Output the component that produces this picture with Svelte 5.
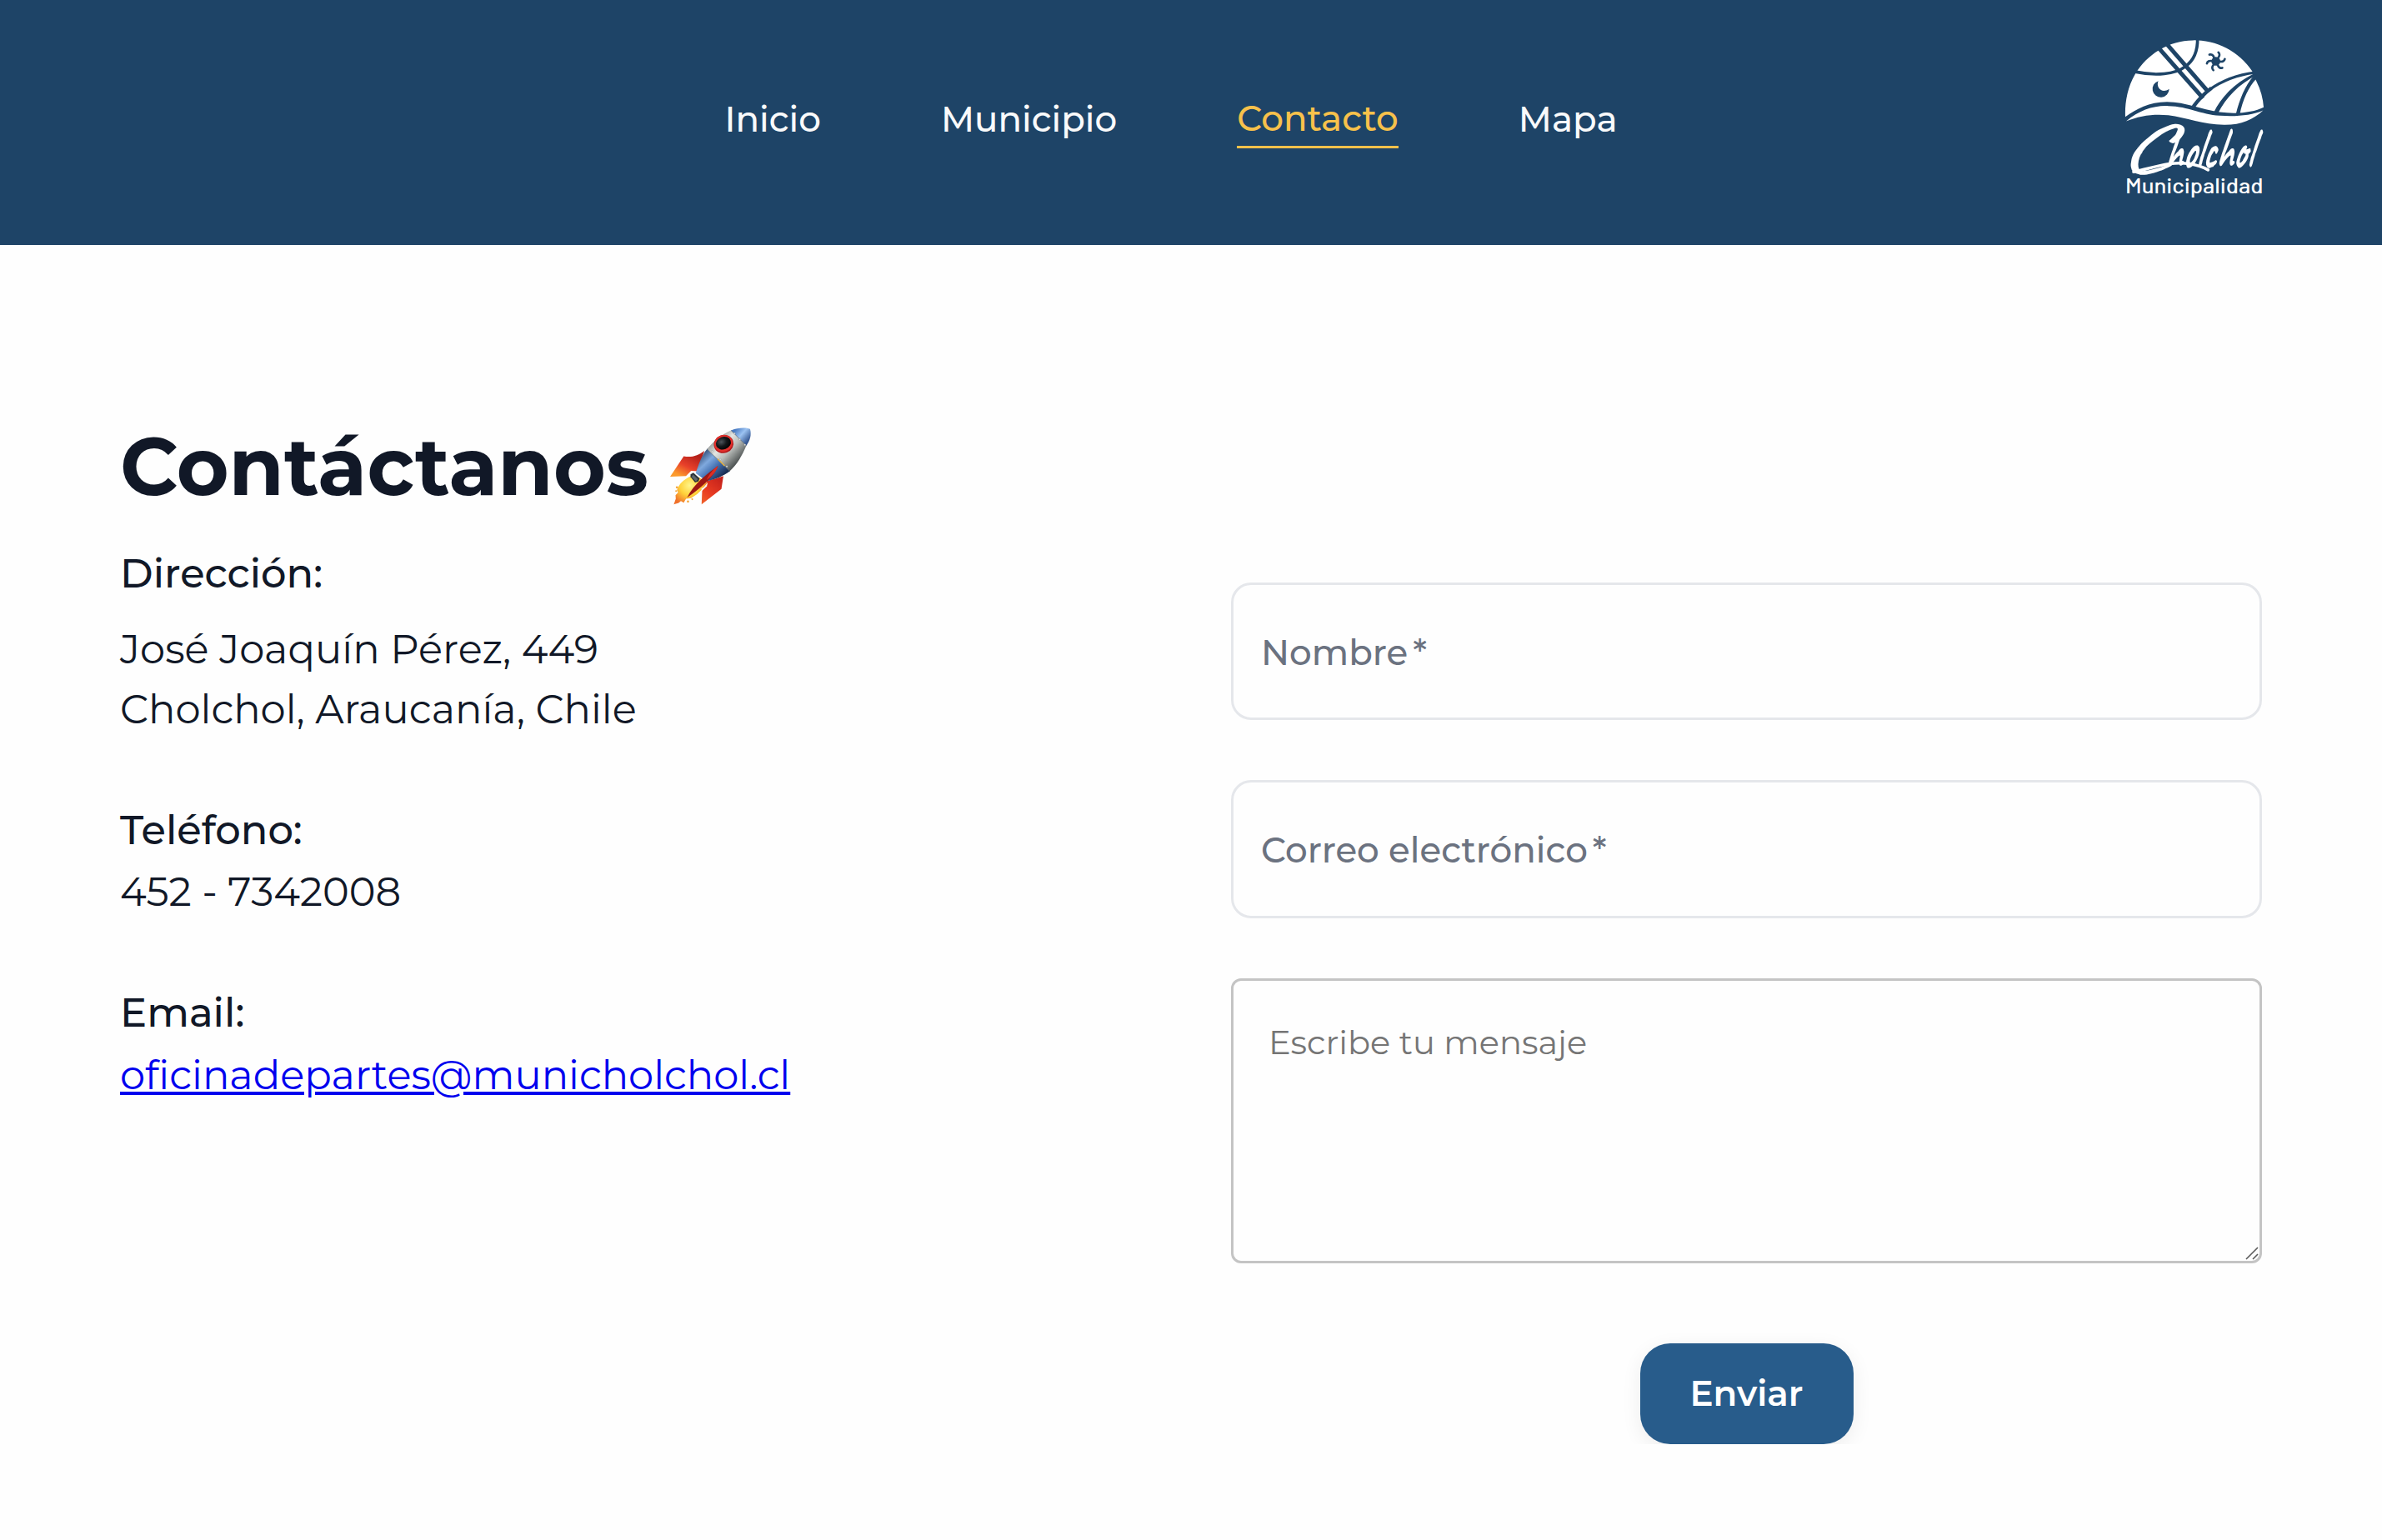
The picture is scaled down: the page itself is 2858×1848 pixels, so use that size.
<script>
  const links = [
    { label: 'Inicio' },
    { label: 'Municipio' },
    { label: 'Contacto', active: true },
    { label: 'Mapa' }
  ];
</script>

{#snippet logo()}
  <svg class="logo" viewBox="78 40 522 590" role="img" aria-label="Cholchol Municipalidad">
    <path fill="#fff" d="M90 331C88 285 96 228 125 178A249 249 0 0 1 547 167L549 178L562 203A249 249 0 0 1 588 297C550 316 490 322 430 314C360 304 310 278 240 277C175 278 130 302 90 331Z" />
    <g fill="none" stroke="#1e4467">
      <path stroke-width="11" d="M126 169C200 185 270 178 306 150C338 128 351 95 350 48" />
      <path stroke-width="15" d="M211 84L370 264" />
      <path stroke-width="15" d="M240 70L388 240" />
      <path stroke-width="13" d="M335 294C355 268 378 244 400 228" />
      <path stroke-width="10" d="M392 234C440 200 490 180 556 172" />
    </g>
    <g fill="#1e4467">
      <path d="M408 316C434 262 480 212 552 176L562 182C500 212 452 262 424 318Z" />
      <path d="M488 322C500 270 522 216 552 184L562 194C534 222 512 272 502 322Z" />
      <path d="M209 202A30 30 0 1 0 248 231C234 241 218 239 211 228C206 219 205 210 209 202Z" />
      <circle cx="416" cy="131" r="16" />
    </g>
    <g fill="none" stroke="#1e4467" stroke-width="8" stroke-linecap="round">
      {#each [0, 60, 120, 180, 240, 300] as turn}
        <path d="M424 119C430 112 431 104 425 99" transform="rotate({turn} 416 131)" />
      {/each}
    </g>
    <path fill="#fff" d="M93 347C140 308 190 290 245 292C320 294 360 322 430 327C490 331 545 326 586 308C550 342 505 361 445 360C370 358 310 334 245 325C190 320 140 327 93 347Z" />
    <g fill="#fff" class="script" transform="translate(0 515) skewX(-8)">
      <text class="initial" x="62" y="10" textLength="188" lengthAdjust="spacingAndGlyphs">C</text>
      <text class="rest" x="232" y="0" textLength="314" lengthAdjust="spacingAndGlyphs">holchol</text>
    </g>
    <path fill="none" stroke="#fff" stroke-width="11" stroke-linecap="round" d="M120 529C190 515 250 490 320 500Q360 506 388 522" />
    <text class="sub" x="90" y="606" fill="#fff" textLength="496" lengthAdjust="spacingAndGlyphs">Municipalidad</text>
  </svg>
{/snippet}

{#snippet rocket()}
  <svg class="rocket" viewBox="70 95 300 285" role="img" aria-label="🚀">
    <defs>
      <linearGradient id="hull" gradientUnits="userSpaceOnUse" x1="225" y1="140" x2="315" y2="225">
        <stop offset="0" stop-color="#8d9190" />
        <stop offset=".35" stop-color="#e3e5e2" />
        <stop offset=".6" stop-color="#b9bdba" />
        <stop offset="1" stop-color="#4b5050" />
      </linearGradient>
      <linearGradient id="blue" gradientUnits="userSpaceOnUse" x1="180" y1="195" x2="255" y2="275">
        <stop offset="0" stop-color="#2f4a74" />
        <stop offset=".35" stop-color="#7fa9de" />
        <stop offset=".65" stop-color="#4470b0" />
        <stop offset="1" stop-color="#1b2f55" />
      </linearGradient>
      <linearGradient id="tip" gradientUnits="userSpaceOnUse" x1="310" y1="105" x2="360" y2="150">
        <stop offset="0" stop-color="#4a7cc4" />
        <stop offset=".4" stop-color="#9cc3f2" />
        <stop offset="1" stop-color="#1f3f7c" />
      </linearGradient>
      <linearGradient id="finLeft" gradientUnits="userSpaceOnUse" x1="160" y1="195" x2="120" y2="275">
        <stop offset="0" stop-color="#b3201a" />
        <stop offset=".55" stop-color="#e8402a" />
        <stop offset="1" stop-color="#fb9a2c" />
      </linearGradient>
      <linearGradient id="finRight" gradientUnits="userSpaceOnUse" x1="255" y1="280" x2="185" y2="365">
        <stop offset="0" stop-color="#c5221b" />
        <stop offset=".6" stop-color="#e93c22" />
        <stop offset="1" stop-color="#f0602a" />
      </linearGradient>
      <radialGradient id="flame" gradientUnits="userSpaceOnUse" cx="145" cy="305" r="70">
        <stop offset="0" stop-color="#fff58a" />
        <stop offset=".5" stop-color="#ffd23a" />
        <stop offset="1" stop-color="#f0702a" />
      </radialGradient>
      <radialGradient id="glass" cx=".4" cy=".35" r=".7">
        <stop offset="0" stop-color="#4c545a" />
        <stop offset=".5" stop-color="#14181b" />
        <stop offset="1" stop-color="#000" />
      </radialGradient>
    </defs>
    <path fill="url(#flame)" d="M150 272C125 284 108 298 100 322L104 330L95 340L96 352L89 372L106 367L114 360L124 366L132 352L150 350L172 335L190 318L208 296L180 278Z" />
    <g fill="#f4a63a"><circle cx="100" cy="312" r="4" /><circle cx="97" cy="325" r="3" /><circle cx="139" cy="362" r="4" /><circle cx="154" cy="354" r="3" /></g>
    <path fill="url(#finLeft)" d="M197 183L172 255L150 254L132 272L76 274L124 202C150 208 175 200 197 183Z" />
    <path fill="url(#finRight)" d="M264 272L257 318L187 372L189 324L208 300L204 290L240 280Z" />
    <path fill="#f5f5f5" d="M188 324L206 308L207 296L198 310L186 316Z" />
    <path fill="url(#blue)" d="M207 176L288 254C262 274 235 284 204 290L166 262C176 235 184 204 207 176Z" />
    <path fill="url(#hull)" d="M292 110L345 164C330 200 312 232 286 255L206 177C232 146 258 126 292 110Z" />
    <path fill="url(#tip)" d="M291 111C315 102 340 100 358 106C364 126 358 146 345 165Z" />
    <path fill="none" stroke="#51606c" stroke-width="2" d="M291 111L345 165M206 177L286 255" />
    <path fill="none" stroke="#e8b13a" stroke-width="4" d="M244 212L268 236" />
    <g fill="#e9ebea" stroke="#777" stroke-width="1">
      <circle cx="303" cy="122" r="3" /><circle cx="322" cy="143" r="3" /><circle cx="340" cy="162" r="3" />
      <circle cx="224" cy="185" r="3" /><circle cx="253" cy="213" r="3" /><circle cx="276" cy="238" r="3" />
    </g>
    <path fill="#2d3337" d="M158 260L180 280L176 291L164 295L148 275L148 266Z" />
    <path fill="#5d676d" d="M157 267L174 283L167 291L152 275Z" />
    <path fill="#9e1712" d="M245 236C210 262 160 298 136 348C165 330 190 305 212 286C226 270 240 252 245 236Z" />
    <path fill="#dd2f24" d="M245 236C230 246 216 262 205 285C224 274 240 254 245 236Z" />
    <ellipse cx="265" cy="159" rx="35" ry="32" fill="#b3181a" transform="rotate(-20 265 159)" />
    <ellipse cx="264" cy="157" rx="33" ry="29" fill="#e2302c" transform="rotate(-20 264 157)" />
    <ellipse cx="264" cy="156" rx="27" ry="22" fill="url(#glass)" transform="rotate(-20 264 156)" />
  </svg>
{/snippet}

<header>
  <nav>
    {#each links as link}
      <a class="link" class:active={link.active} href="#{link.label.toLowerCase()}">{link.label}</a>
    {/each}
  </nav>
  {@render logo()}
</header>

<main>
  <section>
    <h1>Contáctanos {@render rocket()}</h1>
    <h2>Dirección:</h2>
    <p class="address">José Joaquín Pérez, 449<br />Cholchol, Araucanía, Chile</p>
    <h2 class="spaced">Teléfono:</h2>
    <p class="value">452 - 7342008</p>
    <h2 class="spaced">Email:</h2>
    <p class="value mail"><a href="mailto:oficinadepartes@municholchol.cl">oficinadepartes@municholchol.cl</a></p>
  </section>

  <form>
    <div class="field">Nombre<span class="star">*</span></div>
    <div class="field">Correo electrónico<span class="star">*</span></div>
    <div class="message">
      <textarea placeholder="Escribe tu mensaje"></textarea>
      <svg class="grip" viewBox="0 0 16 16" aria-hidden="true">
        <path d="M1 15L15 1M9 15L15 9" fill="none" stroke="#5c5c5c" stroke-width="1.6" />
      </svg>
    </div>
    <button type="button">Enviar</button>
  </form>
</main>

<style>
  :global(body) {
    margin: 0;
    background: #fefefe;
    font-family: Montserrat, 'Open Sans', sans-serif;
    color: #111827;
  }

  header {
    display: flex;
    align-items: flex-start;
    justify-content: space-between;
    box-sizing: border-box;
    height: 294px;
    padding: 43px 138px 0 869.5px;
    background: #1e4467;
  }

  nav {
    display: flex;
    align-items: flex-start;
    gap: 144px;
    padding-top: 70px;
  }

  .link {
    color: #f9fafb;
    font-size: 42px;
    font-weight: 500;
    line-height: 60px;
    text-decoration: none;
  }

  .link.active {
    margin-top: -1px;
    padding-bottom: 3px;
    border-bottom: 3px solid #f7c14b;
    color: #f7c14b;
  }

  .logo {
    display: block;
    width: 174px;
    height: 197px;
    overflow: visible;
  }

  .script {
    font-family: Caveat, cursive;
    font-weight: 600;
  }

  .initial {
    font-size: 248px;
    font-weight: 400;
  }

  .rest {
    font-size: 216px;
  }

  .sub {
    font-family: Barlow, Roboto, sans-serif;
    font-size: 76px;
    font-weight: 500;
  }

  main {
    display: grid;
    grid-template-columns: 1237px 1237px;
    gap: 96px;
    padding: 207px 144px 0;
  }

  h1 {
    display: flex;
    gap: 24px;
    margin: 0 0 34px;
    font-size: 96px;
    font-weight: 700;
    line-height: 117px;
  }

  .rocket {
    width: 102px;
    height: 97px;
    margin-top: 10px;
  }

  h2 {
    margin: 0;
    font-size: 48px;
    font-weight: 500;
    line-height: 72px;
  }

  h2.spaced {
    margin-top: 73px;
  }

  p {
    margin: 0;
    font-size: 48px;
    line-height: 72px;
  }

  .address {
    margin: 19px 0 73px;
  }

  .value {
    margin-top: 2px;
  }

  .mail {
    margin-top: 3px;
  }

  .mail a {
    color: #0000ee;
  }

  form {
    display: flex;
    flex-direction: column;
    padding-top: 198px;
  }

  .field {
    box-sizing: border-box;
    height: 165.3px;
    margin-bottom: 72px;
    padding: 57px 33px 0;
    border: 3px solid #e5e7eb;
    border-radius: 24px;
    color: #6b7280;
    font-size: 42px;
    font-weight: 500;
    line-height: 48px;
  }

  .star {
    margin-left: 6px;
  }

  .message {
    position: relative;
    height: 342px;
  }

  textarea {
    display: block;
    box-sizing: border-box;
    width: 100%;
    height: 100%;
    padding: 50px 42px;
    border: 3px solid #c4c4c4;
    border-radius: 12px;
    background: transparent;
    resize: none;
    font-family: inherit;
    font-size: 40px;
    line-height: 48px;
  }

  textarea::placeholder {
    color: #757575;
  }

  .grip {
    position: absolute;
    right: 4px;
    bottom: 4px;
    width: 16px;
    height: 16px;
  }

  button {
    align-self: center;
    width: 256px;
    height: 121px;
    margin-top: 96px;
    padding: 0 0 1px;
    border: 0;
    border-radius: 36px;
    background: #285c8b;
    box-shadow: 0 6px 24px rgba(0, 0, 0, 0.07);
    color: #fff;
    font-family: inherit;
    font-size: 42px;
    font-weight: 600;
    line-height: 48px;
  }
</style>
